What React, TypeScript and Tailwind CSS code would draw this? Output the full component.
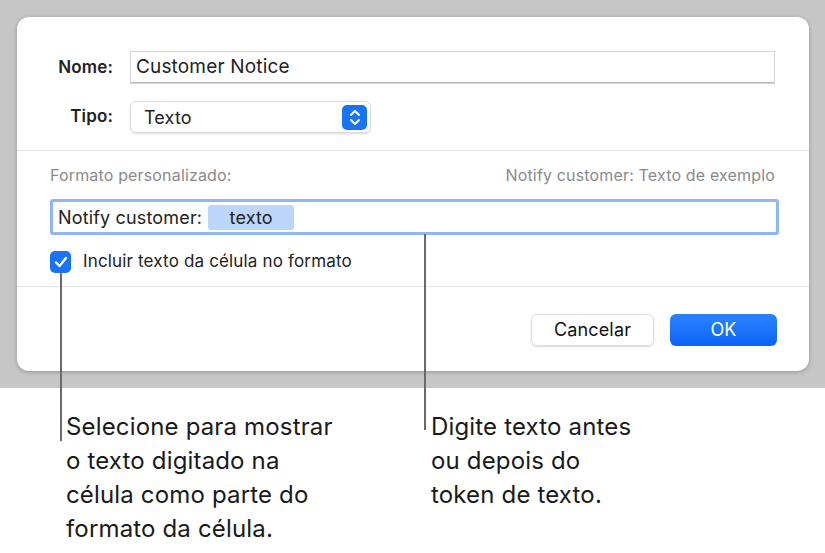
import React from 'react';

const font = { fontFamily: 'Inter, "Noto Sans", sans-serif', letterSpacing: '0.01em' };

export default function App() {
  return (
    <div className="relative w-[825px] h-[553px] bg-white overflow-hidden" style={font}>
      {/* Backdrop with dialog */}
      <div className="h-[388px] bg-[#c6c6c6] pt-[17px] px-[17px]">
        <div className="w-[792px] h-[354px] bg-white rounded-[12px] shadow-[0_1px_4px_rgba(0,0,0,0.25)] flex flex-col">
          <div className="pt-[34px] px-[33px]">
            <div className="flex items-center gap-[17px]">
              <span className="w-[63px] text-right text-[17px] font-semibold text-[#222]">Nome:</span>
              <div className="flex-1 h-[33px] mr-[1px] border border-[#d6d6d6] shadow-[inset_0_-1px_0_#bbb] flex items-center px-[5px] text-[19px] text-[#222]">
                Customer Notice
              </div>
            </div>
            <div className="flex items-center gap-[17px] mt-[17px]">
              <span className="w-[63px] text-right text-[17px] font-semibold text-[#222]">Tipo:</span>
              <div className="w-[241px] h-[32px] rounded-[6px] border border-[#ddd] shadow-[0_1px_2px_rgba(0,0,0,0.15)] flex items-center justify-between pl-[13px] pr-[3px] text-[18px] text-[#222]">
                Texto
                <span className="w-[25px] h-[25px] rounded-[5px] bg-[#1a73f5] flex items-center justify-center">
                  <svg width="12" height="17" viewBox="0 0 12 17" fill="none" stroke="white" strokeWidth="2" strokeLinecap="round" strokeLinejoin="round">
                    <path d="M2 6l4-4 4 4M2 11l4 4 4-4" />
                  </svg>
                </span>
              </div>
            </div>
          </div>
          <div className="mt-[17px] border-t border-[#e3e3e3]" />
          <div className="px-[33px] pt-[12px]">
            <div className="flex justify-between text-[16px] text-[#8a8a8a] pr-[1px]">
              <span>Formato personalizado:</span>
              <span>Notify customer: Texto de exemplo</span>
            </div>
            <div className="mt-[12px] h-[36px] w-[729px] border-[3px] border-[#8fb6f7] rounded-[3px] flex items-center px-[5px] text-[18px] text-[#222]">
              Notify customer:
              <span className="ml-[6px] w-[86px] h-[25px] rounded-[3px] bg-[#bcd7fb] flex items-center justify-center">texto</span>
            </div>
            <div className="mt-[14px] flex items-center gap-[12px] text-[17px] text-[#222]">
              <span className="w-[21px] h-[22px] rounded-[5px] bg-[#1a73f5] flex items-center justify-center">
                <svg width="14" height="12" viewBox="0 0 14 12" fill="none" stroke="white" strokeWidth="2.4" strokeLinecap="round" strokeLinejoin="round">
                  <path d="M2 6.5l3.5 3.5L12 2" />
                </svg>
              </span>
              Incluir texto da célula no formato
            </div>
          </div>
          <div className="mt-[11px] border-t border-[#e3e3e3]" />
          <div className="flex justify-end gap-[16px] pr-[32px] pt-[27px]">
            <div className="w-[123px] h-[32px] rounded-[6px] border border-[#ddd] shadow-[0_1px_2px_rgba(0,0,0,0.15)] flex items-center justify-center text-[18px] text-[#111]">
              Cancelar
            </div>
            <div className="w-[107px] h-[32px] rounded-[6px] bg-gradient-to-b from-[#2a84ff] to-[#0a64f5] flex items-center justify-center text-[18px] text-white">
              OK
            </div>
          </div>
        </div>
      </div>

      {/* Callout leader lines */}
      <div className="absolute left-[60px] top-[271px] w-[2px] h-[170px] bg-[#6a6a6a]" />
      <div className="absolute left-[424px] top-[234px] w-[2px] h-[196px] bg-[#6a6a6a]" />

      {/* Callout texts */}
      <div className="absolute left-[66px] top-[410px] text-[24px] leading-[34px] text-[#1a1a1a]">
        Selecione para mostrar<br />o texto digitado na<br />célula como parte do<br />formato da célula.
      </div>
      <div className="absolute left-[431px] top-[410px] text-[24px] leading-[34px] text-[#1a1a1a]">
        Digite texto antes<br />ou depois do<br />token de texto.
      </div>
    </div>
  );
}
